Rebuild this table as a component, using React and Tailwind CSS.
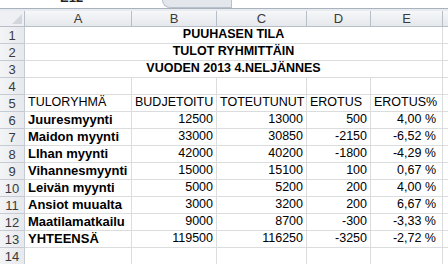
import React from "react";

const cols = ["A", "B", "C", "D", "E"];

const data = [
  ["Juuresmyynti", "12500", "13000", "500", "4,00 %"],
  ["Maidon myynti", "33000", "30850", "-2150", "-6,52 %"],
  ["LIhan myynti", "42000", "40200", "-1800", "-4,29 %"],
  ["Vihannesmyynti", "15000", "15100", "100", "0,67 %"],
  ["Leivän myynti", "5000", "5200", "200", "4,00 %"],
  ["Ansiot muualta", "3000", "3200", "200", "6,67 %"],
  ["Maatilamatkailu", "9000", "8700", "-300", "-3,33 %"],
  ["YHTEENSÄ", "119500", "116250", "-3250", "-2,72 %"],
];

const gridCols = "grid grid-cols-[25px_107px_85px_90px_64px_72px_1fr]";

function RowHead({ n }) {
  return (
    <div className="h-[17px] border-r border-b border-[#c6cbd3] bg-gradient-to-r from-[#f3f4f6] to-[#e6e9ed] text-[#3a3a3a] text-[13px] leading-[17px] text-center">
      {n}
    </div>
  );
}

function Cell({ children, className = "", bold = false, right = false, pr = "pr-[3px]" }) {
  return (
    <div
      className={`h-[17px] border-r border-b border-[#dadcdd] flex items-end overflow-visible whitespace-nowrap pb-[1px] ${
        right ? `justify-end ${pr}` : "justify-start pl-[3px]"
      } ${bold ? "font-bold text-[13px]" : "text-[12.5px]"} ${className}`}
    >
      <span className="leading-[15px]">{children}</span>
    </div>
  );
}

export default function App() {
  const titles = ["PUUHASEN TILA", "TULOT RYHMITTÄIN", "VUODEN 2013 4.NELJÄNNES"];
  return (
    <div className="w-[448px] h-[264px] overflow-hidden bg-white text-black font-['Liberation_Sans',Arial,sans-serif]">
      {/* formula bar strip */}
      <div className="h-[9px] flex border-b border-[#a9b1bc] bg-white relative">
        <div className="w-[162px] h-full overflow-hidden relative">
          <span className="absolute left-[60px] top-[-9px] text-[13px] font-bold leading-[13px] text-[#222]">E12</span>
        </div>
        <div className="w-[69px] h-full bg-[#e3e7ec] rounded-bl-[14px] border-l border-b border-[#b9c1cc]"></div>
        <div className="flex-1 h-full bg-white border-l border-[#b9c1cc]"></div>
      </div>
      <div className="h-[2px] bg-[#e8ebef]"></div>
      {/* column header */}
      <div className={`${gridCols} h-[16px]`}>
        <div className="border-r border-b border-[#b8bec7] bg-[#eef0f3] relative">
          <svg className="absolute right-[2px] bottom-[2px]" width="10" height="10" viewBox="0 0 10 10">
            <polygon points="10,0 10,10 0,10" fill="#d3d7dd" />
          </svg>
        </div>
        {cols.map((c) => (
          <div
            key={c}
            className="border-r border-b border-[#b8bec7] bg-gradient-to-b from-[#f6f7f9] to-[#e5e8ec] text-[#3a3a3a] text-[13px] leading-[15px] text-center"
          >
            {c}
          </div>
        ))}
        <div className="border-b border-[#b8bec7] bg-gradient-to-b from-[#f6f7f9] to-[#e5e8ec]"></div>
      </div>
      {/* title rows */}
      {titles.map((t, i) => (
        <div key={t} className={gridCols}>
          <RowHead n={i + 1} />
          <div className="col-span-5 h-[17px] border-r border-b border-[#dadcdd] flex items-end justify-center pb-[1px] font-bold text-[12.5px] whitespace-nowrap">
            <span className="leading-[15px]">{t}</span>
          </div>
          <div className="h-[17px] border-b border-[#dadcdd]"></div>
        </div>
      ))}
      {/* row 4 */}
      <div className={gridCols}>
        <RowHead n={4} />
        {cols.map((c) => (
          <Cell key={c}></Cell>
        ))}
        <div className="h-[17px] border-b border-[#dadcdd]"></div>
      </div>
      {/* row 5 headers */}
      <div className={gridCols}>
        <RowHead n={5} />
        <Cell>TULORYHMÄ</Cell>
        <Cell>BUDJETOITU</Cell>
        <Cell>TOTEUTUNUT</Cell>
        <Cell>EROTUS</Cell>
        <Cell>EROTUS%</Cell>
        <div className="h-[17px] border-b border-[#dadcdd]"></div>
      </div>
      {data.map((r, i) => (
        <div key={r[0]} className={gridCols}>
          <RowHead n={i + 6} />
          <Cell bold>{r[0]}</Cell>
          <Cell right>{r[1]}</Cell>
          <Cell right>{r[2]}</Cell>
          <Cell right>{r[3]}</Cell>
          <Cell right pr="pr-[6px]">{r[4]}</Cell>
          <div className="h-[17px] border-b border-[#dadcdd]"></div>
        </div>
      ))}
      <div className={gridCols}>
        <RowHead n={14} />
        {cols.map((c) => (
          <Cell key={c}></Cell>
        ))}
        <div className="h-[17px] border-b border-[#dadcdd]"></div>
      </div>
    </div>
  );
}
